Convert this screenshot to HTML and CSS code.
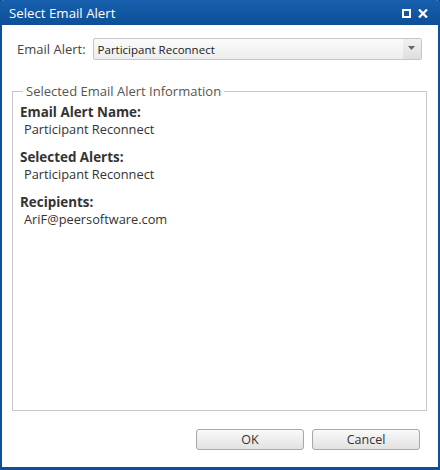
FILE: index.html
```html
<!DOCTYPE html>
<html>
<head>
<meta charset="utf-8">
<link rel="stylesheet" href="styles.css">
</head>
<body>
<div class="window">
  <div class="titlebar">
    <span class="title">Select Email Alert</span>
    <div class="tools">
      <svg class="tool" width="9" height="9" viewBox="0 0 9 9"><rect x="1" y="1" width="7" height="7" fill="none" stroke="#fff" stroke-width="2"/></svg>
      <svg class="tool" width="10" height="9" viewBox="0 0 10 9"><path d="M1 0.5L9 8.5M9 0.5L1 8.5" stroke="#fff" stroke-width="2.2"/></svg>
    </div>
  </div>
  <div class="content">
    <div class="row">
      <label class="field-label">Email Alert:</label>
      <div class="select">
        <span class="select-text">Participant Reconnect</span>
        <span class="select-arrow"><svg width="7" height="4" viewBox="0 0 7 4"><path d="M0 0H7L3.5 4Z" fill="#666"/></svg></span>
      </div>
    </div>
    <fieldset class="info">
      <legend>Selected Email Alert Information</legend>
      <div class="item">
        <div class="item-label">Email Alert Name:</div>
        <div class="item-value">Participant Reconnect</div>
      </div>
      <div class="item">
        <div class="item-label">Selected Alerts:</div>
        <div class="item-value">Participant Reconnect</div>
      </div>
      <div class="item">
        <div class="item-label">Recipients:</div>
        <div class="item-value">AriF@peersoftware.com</div>
      </div>
    </fieldset>
    <div class="buttons">
      <button class="btn">OK</button>
      <button class="btn">Cancel</button>
    </div>
  </div>
</div>
</body>
</html>
```
FILE: styles.css
```css
html, body {
  margin: 0;
  padding: 0;
  background: #fff;
}
.window {
  width: 440px;
  height: 470px;
  box-sizing: border-box;
  border: 2px solid #0e4f98;
  border-top: 0;
  border-bottom-width: 3px;
  background: #fff;
  display: flex;
  flex-direction: column;
  font-family: "Open Sans", "Noto Sans", sans-serif;
}
.titlebar {
  height: 25px;
  margin: 0 -2px;
  background: linear-gradient(#1760ad, #0e4f98);
  border-radius: 4px 4px 0 0;
  display: flex;
  align-items: center;
  justify-content: space-between;
  padding: 1px 12px 0 9px;
  box-sizing: border-box;
  color: #fff;
  flex: none;
}
.title {
  font-size: 13.25px;
}
.tools {
  display: flex;
  gap: 7px;
  align-items: center;
  padding-top: 1px;
}
.tool {
  display: block;
}
.content {
  flex: 1;
  display: flex;
  flex-direction: column;
  padding: 13px 11px 17px 10px;
}
.row {
  display: flex;
  align-items: center;
  gap: 7px;
  padding: 0 5px 0 5px;
}
.field-label {
  font-size: 13px;
  color: #444;
}
.select {
  flex: 1;
  height: 20px;
  border: 1px solid #c6c6c6;
  border-radius: 2px;
  background: linear-gradient(#fbfbfb, #ededed);
  display: flex;
  align-items: center;
  justify-content: space-between;
}
.select-text {
  font-size: 11.5px;
  color: #222;
  padding-left: 4px;
}
.select-arrow {
  width: 18px;
  height: 20px;
  display: flex;
  align-items: center;
  justify-content: center;
  padding-right: 1px;
  padding-bottom: 2px;
  box-sizing: border-box;
  background: linear-gradient(#f1f1f1, #dedede);
}
.info {
  flex: 1;
  margin: 22px 0 0 0;
  border: 1px solid #c8c8c8;
  padding: 4px 7px 0 7px;
  min-width: 0;
}
.info legend {
  font-size: 13px;
  color: #555;
  padding: 0 3px;
  margin-left: 3px;
}
.item {
  margin-bottom: 12px;
}
.item-label {
  font-size: 13.4px;
  font-weight: bold;
  color: #333;
  line-height: 16px;
}
.item-value {
  font-size: 12.8px;
  color: #333;
  padding-left: 4px;
  line-height: 16px;
  margin-top: 1px;
}
.buttons {
  display: flex;
  justify-content: flex-end;
  gap: 8px;
  margin-top: 18px;
  padding-right: 7px;
}
.btn {
  width: 108px;
  height: 21px;
  border: 1px solid #a8a8a8;
  border-radius: 3px;
  background: linear-gradient(#f9f9f9, #e2e2e2);
  font-family: "Open Sans", "Noto Sans", sans-serif;
  font-size: 12.5px;
  color: #333;
  padding: 0;
}
```
